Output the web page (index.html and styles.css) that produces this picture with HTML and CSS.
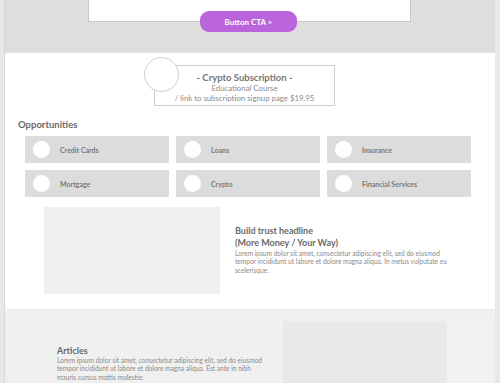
FILE: index.html
```html
<!DOCTYPE html>
<html>
<head>
<meta charset="utf-8">
<link rel="stylesheet" href="styles.css">
</head>
<body>
<div class="page">
  <section class="hero">
    <div class="hero-box"></div>
    <a class="cta">Button CTA &gt;</a>
  </section>
  <section class="main">
    <div class="sub">
      <div class="sub-circle"></div>
      <div class="sub-box">
        <div class="sub-title">- Crypto Subscription -</div>
        <div class="sub-line">Educational Course</div>
        <div class="sub-line">/ link to subscription signup page $19.95</div>
      </div>
    </div>
    <h2 class="opp-title">Opportunities</h2>
    <div class="tiles">
      <div class="tile"><span class="dot"></span><span class="tile-label">Credit Cards</span></div>
      <div class="tile"><span class="dot"></span><span class="tile-label">Loans</span></div>
      <div class="tile"><span class="dot"></span><span class="tile-label">Insurance</span></div>
      <div class="tile"><span class="dot"></span><span class="tile-label">Mortgage</span></div>
      <div class="tile"><span class="dot"></span><span class="tile-label">Crypto</span></div>
      <div class="tile"><span class="dot"></span><span class="tile-label">Financial Services</span></div>
    </div>
    <div class="trust">
      <div class="trust-img"></div>
      <div class="trust-text">
        <h3 class="trust-head">Build trust headline<br>(More Money / Your Way)</h3>
        <p class="lorem">Lorem ipsum dolor sit amet, consectetur adipiscing elit, sed do eiusmod tempor incididunt ut labore et dolore magna aliqua. In metus vulputate eu scelerisque.</p>
      </div>
    </div>
  </section>
  <section class="articles">
    <div class="art-text">
      <h3 class="art-head">Articles</h3>
      <p class="lorem">Lorem ipsum dolor sit amet, consectetur adipiscing elit, sed do eiusmod tempor incididunt ut labore et dolore magna aliqua. Est ante in nibh mauris cursus mattis molestie.</p>
    </div>
    <div class="art-box"></div>
    <div class="art-side"></div>
  </section>
</div>
</body>
</html>
```

FILE: styles.css
```css
* { box-sizing: border-box; }
html, body { margin: 0; padding: 0; }
body {
  background: #e8e8e8;
  font-family: Lato, "Open Sans", sans-serif;
  color: #666;
  width: 500px;
  height: 383px;
  overflow: hidden;
}
.page {
  margin-left: 4px;
  width: 491px;
  border-left: 1px solid #d6d6d6;
}
.hero {
  height: 53px;
  background: #dedede;
  border-bottom: 1px solid #e6e6e6;
  display: flex;
  flex-direction: column;
  align-items: center;
}
.hero-box {
  width: 323px;
  height: 22px;
  background: #fff;
  border: 1px solid #c9c9c9;
  border-top: none;
  margin-left: -1px;
}
.cta {
  margin-top: -11px;
  width: 97px;
  height: 21px;
  border-radius: 9px;
  background: #bb65dc;
  color: #fff;
  font-weight: 700;
  font-size: 8px;
  display: flex;
  align-items: center;
  justify-content: center;
  margin-left: -3px;
}
.main {
  background: #fff;
  height: 256px;
  padding-top: 4px;
}
.sub {
  display: flex;
  margin-left: 139px;
}
.sub-circle {
  width: 35px;
  height: 35px;
  border-radius: 50%;
  border: 1px solid #cfcfcf;
  background: #fff;
  position: relative;
  z-index: 1;
  margin-right: -25px;
}
.sub-box {
  margin-top: 8px;
  width: 181px;
  height: 41px;
  border: 1px solid #cfcfcf;
  text-align: center;
  padding-top: 6px;
  font-size: 7.8px;
  line-height: 10px;
  color: #8a8a8a;
}
.sub-title {
  font-size: 9.5px;
  font-weight: 700;
  color: #777;
  line-height: 11px;
}
.opp-title {
  margin: 13px 0 0 13px;
  font-size: 9.5px;
  font-weight: 700;
  color: #6a6a6a;
  line-height: 12px;
}
.tiles {
  margin: 5px 0 0 20px;
  display: grid;
  grid-template-columns: repeat(3, 144px);
  grid-auto-rows: 27px;
  column-gap: 7px;
  row-gap: 7px;
}
.tile {
  background: #dcdcdc;
  display: flex;
  align-items: center;
  padding-left: 8px;
}
.dot {
  width: 17px;
  height: 17px;
  border-radius: 50%;
  background: #fff;
}
.tile-label {
  margin-left: 10px;
  font-size: 7px;
  font-weight: 700;
  color: #7a7a7a;
}
.trust {
  display: flex;
  align-items: center;
  margin: 10px 0 0 39px;
}
.trust-img {
  width: 176px;
  height: 87px;
  background: #f0f0f0;
}
.trust-text {
  margin-left: 15px;
  width: 212px;
  margin-top: -2px;
}
.trust-head {
  margin: 0;
  font-size: 9px;
  line-height: 12px;
  font-weight: 700;
  color: #6a6a6a;
}
.lorem {
  margin: 0;
  font-size: 6.6px;
  line-height: 8.3px;
  color: #8a8a8a;
}
.articles {
  background: #f0f0f0;
  height: 80px;
  display: flex;
  padding-top: 11px;
  border-top: 1px solid #ececec;
}
.art-text {
  margin-left: 52px;
  width: 214px;
  padding-top: 24px;
}
.art-head {
  margin: 0;
  font-size: 9px;
  line-height: 11px;
  font-weight: 700;
  color: #666;
}
.art-box {
  margin-left: 12px;
  width: 164px;
  background: #e9e9e9;
}
.art-side {
  margin-left: 0;
  width: 44px;
  background: #f2f2f2;
}
```
